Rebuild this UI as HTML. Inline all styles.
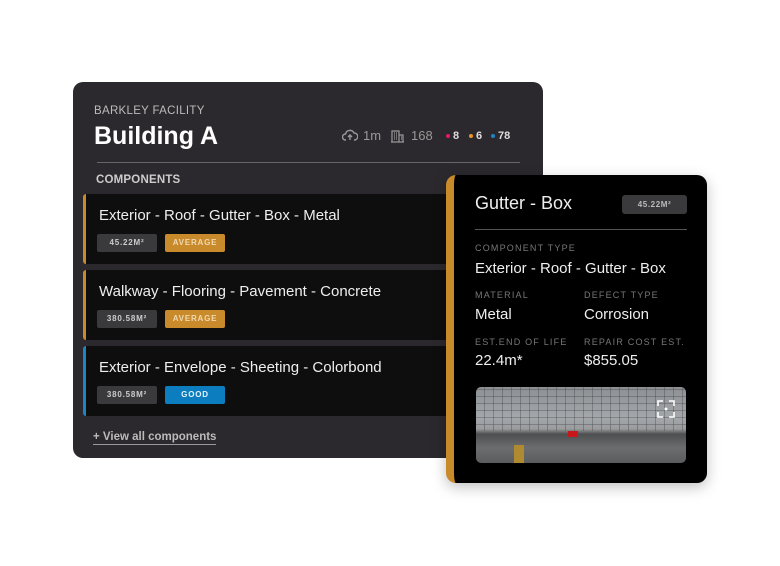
<!DOCTYPE html>
<html><head><style>
*{margin:0;padding:0;box-sizing:border-box}
body{width:780px;height:566px;background:#fff;font-family:"Liberation Sans",sans-serif;position:relative;overflow:hidden}
.main{position:absolute;left:73px;top:82px;width:470px;height:376px;background:#2b292d;border-radius:10px}
.abs{position:absolute}
.row{position:absolute;left:10px;width:370px;height:70px;background:#0e0e0e;border-radius:3px;border-left:3px solid #c98a2c}
.row .t{position:absolute;left:13px;top:13px;color:#eee;font-size:15px}
.pill{position:absolute;top:40px;height:18px;border-radius:2px;font-size:8px;font-weight:bold;letter-spacing:.8px;text-align:center;line-height:18px}
.p1{left:11px;width:60px;background:#3a393c;color:#ccc}
.p2{left:79px;width:60px;background:#c98a2c;color:#f0d9b0}
.card{position:absolute;left:446px;top:175px;width:261px;height:308px;background:#000;border-radius:10px;border-left:8px solid #c98a2c;box-shadow:0 4px 14px rgba(0,0,0,.25)}
.lab{position:absolute;color:#777;font-size:9px;letter-spacing:1.2px}
.val{position:absolute;color:#eee;font-size:15px}
</style></head><body>
<div class="main">
 <div class="abs" style="left:21px;top:23px;color:#bbb;font-size:11.5px;letter-spacing:.3px">BARKLEY FACILITY</div>
 <div class="abs" style="left:21px;top:40px;color:#fff;font-size:25px;font-weight:bold">Building A</div>
 <div class="abs" style="left:266px;top:43px;width:180px;height:22px;color:#999;font-size:13px;line-height:22px">
  <svg class="abs" style="left:3px;top:4px" width="16" height="13" viewBox="0 0 16 13"><path d="M4 11H3.5a3 3 0 0 1 0-6 4.5 4.5 0 0 1 8.5-1 3.5 3.5 0 0 1 .5 7H12M8 11V6M6 8l2-2 2 2" fill="none" stroke="#999" stroke-width="1.4"/></svg>
  <span class="abs" style="left:24px">1m</span>
  <svg class="abs" style="left:52px;top:5px" width="13" height="13" viewBox="0 0 13 13"><path d="M1 12V1h7v11M8 5h4v7M0 12h13M3 3h1M5 3h1M3 5h1M5 5h1M3 7h1M5 7h1M3 9h1M5 9h1M10 7h1M10 9h1" fill="none" stroke="#999" stroke-width="1.2"/></svg>
  <span class="abs" style="left:72px">168</span>
  <span class="abs" style="left:107px;top:9px;width:4px;height:4px;border-radius:2px;background:#e0196a"></span>
  <span class="abs" style="left:114px;font-size:11px;color:#ddd;font-weight:bold">8</span>
  <span class="abs" style="left:130px;top:9px;width:4px;height:4px;border-radius:2px;background:#e8961e"></span>
  <span class="abs" style="left:137px;font-size:11px;color:#ddd;font-weight:bold">6</span>
  <span class="abs" style="left:152px;top:9px;width:4px;height:4px;border-radius:2px;background:#1a86c8"></span>
  <span class="abs" style="left:159px;font-size:11px;color:#ddd;font-weight:bold">78</span>
 </div>
 <div class="abs" style="left:24px;top:80px;width:423px;height:1px;background:#666"></div>
 <div class="abs" style="left:23px;top:92px;color:#ccc;font-size:11.5px;font-weight:bold;letter-spacing:.2px">COMPONENTS</div>
 <div class="row" style="top:112px"><div class="t">Exterior - Roof - Gutter - Box - Metal</div><div class="pill p1">45.22M²</div><div class="pill p2">AVERAGE</div></div>
 <div class="row" style="top:188px"><div class="t">Walkway - Flooring - Pavement - Concrete</div><div class="pill p1">380.58M²</div><div class="pill p2">AVERAGE</div></div>
 <div class="row" style="top:264px;border-left-color:#1a86c8"><div class="t">Exterior - Envelope - Sheeting - Colorbond</div><div class="pill p1">380.58M²</div><div class="pill p2" style="background:#0c7ec0;color:#e6f2fa">GOOD</div></div>
 <div class="abs" style="left:20px;top:348px;color:#bbb;font-size:11.5px;font-weight:bold;border-bottom:1px solid #999;line-height:14px">+ View all components</div>
</div>
<div class="card">
 <div class="abs" style="left:21px;top:18px;color:#eee;font-size:18px">Gutter - Box</div>
 <div class="abs" style="left:168px;top:20px;width:65px;height:19px;background:#3a393c;border-radius:3px;color:#bbb;font-size:8px;font-weight:bold;text-align:center;line-height:19px;letter-spacing:.6px">45.22M²</div>
 <div class="abs" style="left:21px;top:54px;width:212px;height:1px;background:#555"></div>
 <div class="lab" style="left:21px;top:68px">COMPONENT TYPE</div>
 <div class="val" style="left:21px;top:85px">Exterior - Roof - Gutter - Box</div>
 <div class="lab" style="left:21px;top:115px">MATERIAL</div>
 <div class="val" style="left:21px;top:131px">Metal</div>
 <div class="lab" style="left:130px;top:115px">DEFECT TYPE</div>
 <div class="val" style="left:130px;top:131px">Corrosion</div>
 <div class="lab" style="left:21px;top:162px">EST.END OF LIFE</div>
 <div class="val" style="left:21px;top:177px">22.4m*</div>
 <div class="lab" style="left:130px;top:162px">REPAIR COST EST.</div>
 <div class="val" style="left:130px;top:177px">$855.05</div>
 <div class="abs" style="left:22px;top:212px;width:210px;height:76px;border-radius:5px;overflow:hidden;background:linear-gradient(#8d9093 0,#a4a7aa 40%,#9a9c9e 55%,#4d4f50 62%,#6b6d6f 80%,#5a5c5e 100%)">
  <div class="abs" style="left:0;top:0;width:210px;height:44px;background:repeating-linear-gradient(90deg,transparent 0 8px,rgba(60,60,70,.35) 8px 9px),repeating-linear-gradient(0deg,transparent 0 6px,rgba(60,60,70,.35) 6px 7px)"></div>
  <div class="abs" style="left:92px;top:44px;width:10px;height:6px;background:#c8161a"></div>
  <div class="abs" style="left:38px;top:58px;width:10px;height:18px;background:#b08a30"></div>
  <svg class="abs" style="left:181px;top:13px" width="18" height="18" viewBox="0 0 18 18"><path d="M1 6V1h5M12 1h5v5M17 12v5h-5M6 17H1v-5" fill="none" stroke="#fff" stroke-width="1.6"/><circle cx="9" cy="9" r="1.5" fill="#fff"/></svg>
 </div>
</div>
</body></html>
